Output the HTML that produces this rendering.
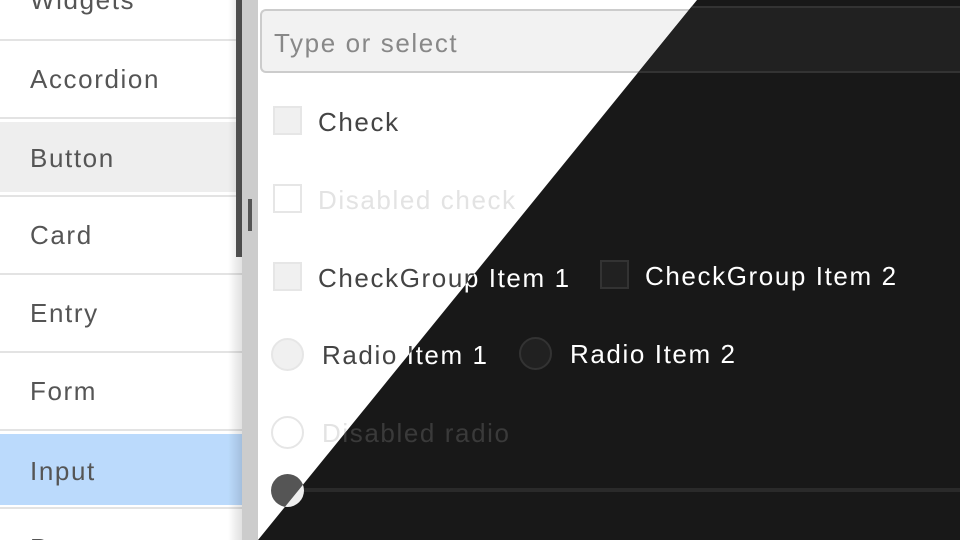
<!DOCTYPE html>
<html style="overflow:hidden;width:960px;height:540px"><head><meta charset="utf-8"><style>
*{margin:0;padding:0;box-sizing:border-box}
body{width:960px;height:540px;overflow:hidden;position:relative;font-family:"Liberation Sans",sans-serif;background:#fff}
.abs{position:absolute}
.side{left:0;top:0;width:242px;height:540px;background:#fff;overflow:hidden}
.item{position:absolute;left:0;width:236px;height:76px;font-size:26px;color:#555;padding-left:30px;line-height:76px;letter-spacing:1.6px}
.sep{position:absolute;left:0;width:242px;height:2px;background:#e3e3e3}
.layer{position:absolute;left:0;top:0;width:960px;height:540px;overflow:hidden}
.t{position:absolute;font-size:26px;line-height:30px;white-space:nowrap;letter-spacing:1.6px}
.cb{position:absolute;width:29px;height:29px;border:2px solid}
.rd{position:absolute;width:33px;height:33px;border:2px solid;border-radius:50%}
</style></head><body>
<div class="abs side">
 <div class="item" style="top:0;height:39px;line-height:0px">Widgets</div>
 <div class="sep" style="top:39px"></div>
 <div class="item" style="top:41px">Accordion</div>
 <div class="sep" style="top:117px"></div>
 <div class="item" style="top:122px;height:70px;line-height:72px;background:#eee;width:242px">Button</div>
 <div class="sep" style="top:195px"></div>
 <div class="item" style="top:197px">Card</div>
 <div class="sep" style="top:273px"></div>
 <div class="item" style="top:275px">Entry</div>
 <div class="sep" style="top:351px"></div>
 <div class="item" style="top:353px">Form</div>
 <div class="sep" style="top:429px"></div>
 <div class="item" style="top:434px;height:71px;line-height:74px;background:#bbdafc;width:242px">Input</div>
 <div class="sep" style="top:507px"></div>
 <div class="item" style="top:510px;height:30px;line-height:76px;overflow:hidden">Progress</div>
 <div class="abs" style="left:236px;top:0;width:6px;height:257px;background:#555"></div>
</div>
<div class="abs" style="left:228px;top:0;width:14px;height:540px;background:linear-gradient(90deg,rgba(0,0,0,0),rgba(0,0,0,.12))"></div>
<div class="abs" style="left:242px;top:0;width:16px;height:540px;background:#ccc"></div>
<div class="abs" style="left:248px;top:199px;width:4px;height:32px;background:#555"></div>

<div class="layer">
 <div class="abs" style="left:260px;top:9px;width:700px;height:64px;background:#f2f2f2;border:2px solid #ccc;border-right:none;border-radius:6px 0 0 6px"></div>
 <div class="t" style="left:274px;top:28px;color:#888">Type or select</div>
 <div class="cb" style="left:273px;top:106px;border-color:#e6e6e6;background:#f0f0f0"></div>
 <div class="t" style="left:318px;top:107px;color:#444">Check</div>
 <div class="cb" style="left:273px;top:184px;border-color:#e6e6e6;background:#fff"></div>
 <div class="t" style="left:318px;top:185px;color:#e3e3e3">Disabled check</div>
 <div class="cb" style="left:273px;top:262px;border-color:#e6e6e6;background:#f0f0f0"></div>
 <div class="t" style="left:318px;top:263px;color:#444">CheckGroup Item 1</div>
 <div class="rd" style="left:271px;top:338px;border-color:#e6e6e6;background:#f0f0f0"></div>
 <div class="t" style="left:322px;top:340px;color:#444">Radio Item 1</div>
 <div class="rd" style="left:271px;top:416px;border-color:#e6e6e6;background:#fff"></div>
 <div class="t" style="left:322px;top:418px;color:#e3e3e3">Disabled radio</div>
 <div class="abs" style="left:271px;top:474px;width:33px;height:33px;border-radius:50%;background:#555"></div>
</div>

<div class="layer" style="background:#181818;clip-path:polygon(697px 0,960px 0,960px 540px,258px 540px)">
 <div class="abs" style="left:260px;top:6px;width:700px;height:67px;background:#212121;border:2px solid #333;border-right:none;border-radius:6px 0 0 6px"></div>
 <div class="t" style="left:274px;top:28px;color:#888">Type or select</div>
 <div class="cb" style="left:273px;top:106px;border-color:#333;background:#212121"></div>
 <div class="t" style="left:318px;top:107px;color:#fff">Check</div>
 <div class="t" style="left:318px;top:185px;color:#3a3a3a">Disabled check</div>
 <div class="t" style="left:318px;top:263px;color:#fff">CheckGroup Item 1</div>
 <div class="cb" style="left:600px;top:260px;border-color:#333;background:#212121"></div>
 <div class="t" style="left:645px;top:261px;color:#fff">CheckGroup Item 2</div>
 <div class="t" style="left:322px;top:340px;color:#fff">Radio Item 1</div>
 <div class="rd" style="left:519px;top:337px;border-color:#333;background:#212121"></div>
 <div class="t" style="left:570px;top:339px;color:#fff">Radio Item 2</div>
 <div class="t" style="left:322px;top:418px;color:#3a3a3a">Disabled radio</div>
 <div class="abs" style="left:288px;top:488px;width:672px;height:4px;background:#2a2a2a"></div>
 <div class="abs" style="left:271px;top:474px;width:33px;height:33px;border-radius:50%;background:#eee"></div>
</div>
</body></html>
